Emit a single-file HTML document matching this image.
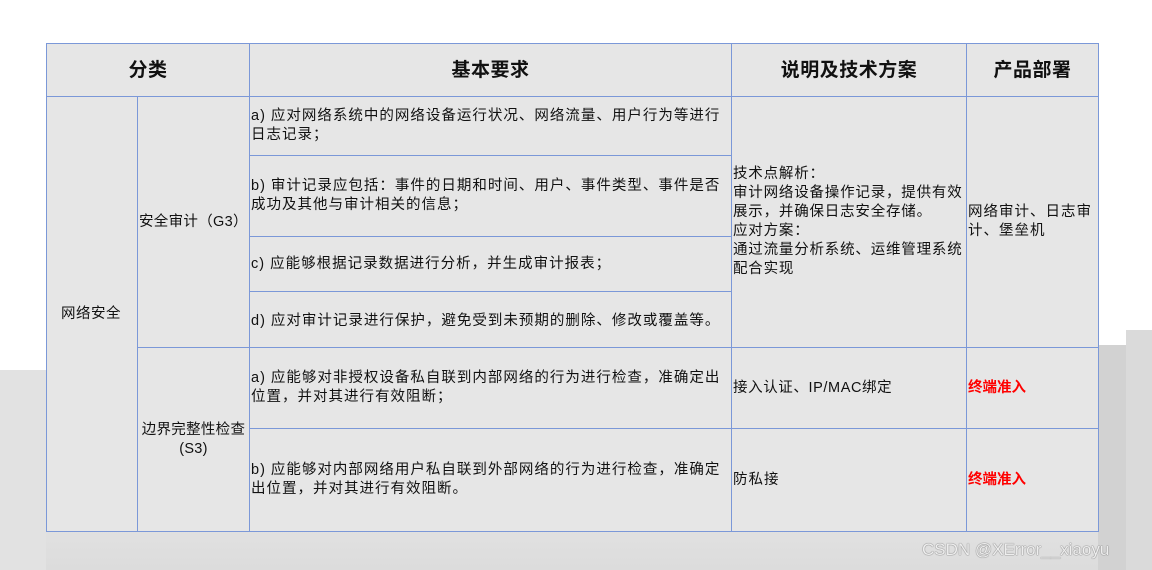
<!DOCTYPE html>
<html><head><meta charset="utf-8"><style>
body{margin:0;width:1152px;height:570px;overflow:hidden;background:#fff;position:relative;font-family:"Liberation Sans","Noto Sans CJK SC",sans-serif;}
.bg{position:absolute;left:0;right:0;bottom:0;height:200px;background:linear-gradient(to bottom,rgba(255,255,255,1) 0%,rgba(235,235,235,1) 40%,rgba(220,220,220,1) 100%);}
.b1{position:absolute}
.c{position:absolute;box-sizing:border-box;background:#e6e6e6;border:1px solid #7b98d8;font-size:14.5px;letter-spacing:1px;color:#111;line-height:19px;display:flex;align-items:center;padding:0 1px;}
.h{font-size:19px;font-weight:bold;justify-content:center;letter-spacing:0.5px}
.r{color:#f00;font-weight:bold;}
.wm{position:absolute;left:922px;top:540px;font-size:17px;color:#eee;text-shadow:0 0 1px #666,0 0 1px #888;}
</style></head><body>
<div class="bg"></div>
<div class="b1" style="left:1098px;top:345px;width:28px;height:225px;background:#d2d2d2"></div>
<div class="b1" style="left:1126px;top:330px;width:26px;height:240px;background:#dadada"></div>
<div class="b1" style="left:0;top:370px;width:46px;height:200px;background:#e2e2e2"></div>
<div class="c h" style="left:46px;top:43px;width:204px;height:54px">分类</div>
<div class="c h" style="left:249px;top:43px;width:483px;height:54px">基本要求</div>
<div class="c h" style="left:731px;top:43px;width:236px;height:54px">说明及技术方案</div>
<div class="c h" style="left:966px;top:43px;width:133px;height:54px">产品部署</div>
<div class="c" style="left:46px;top:96px;width:92px;height:436px;padding-left:14px;letter-spacing:0.5px">网络安全</div>
<div class="c" style="left:137px;top:96px;width:113px;height:252px;letter-spacing:0.3px">安全审计（G3）</div>
<div class="c" style="left:137px;top:347px;width:113px;height:185px;justify-content:center;text-align:center;letter-spacing:0.3px">边界完整性检查<br>(S3)</div>
<div class="c" style="left:249px;top:96px;width:483px;height:60px">a) 应对网络系统中的网络设备运行状况、网络流量、用户行为等进行日志记录；</div>
<div class="c" style="left:249px;top:155px;width:483px;height:82px">b) 审计记录应包括：事件的日期和时间、用户、事件类型、事件是否成功及其他与审计相关的信息；</div>
<div class="c" style="left:249px;top:236px;width:483px;height:56px">c) 应能够根据记录数据进行分析，并生成审计报表；</div>
<div class="c" style="left:249px;top:291px;width:483px;height:57px;padding-top:4px">d) 应对审计记录进行保护，避免受到未预期的删除、修改或覆盖等。</div>
<div class="c" style="left:249px;top:347px;width:483px;height:82px">a) 应能够对非授权设备私自联到内部网络的行为进行检查，准确定出位置，并对其进行有效阻断；</div>
<div class="c" style="left:249px;top:428px;width:483px;height:104px">b) 应能够对内部网络用户私自联到外部网络的行为进行检查，准确定出位置，并对其进行有效阻断。</div>
<div class="c" style="left:731px;top:96px;width:236px;height:252px;letter-spacing:0.8px">技术点解析：<br>审计网络设备操作记录，提供有效展示，并确保日志安全存储。<br>应对方案：<br>通过流量分析系统、运维管理系统配合实现</div>
<div class="c" style="left:966px;top:96px;width:133px;height:252px">网络审计、日志审计、堡垒机</div>
<div class="c" style="left:731px;top:347px;width:236px;height:82px;letter-spacing:0.6px">接入认证、IP/MAC绑定</div>
<div class="c r" style="left:966px;top:347px;width:133px;height:82px;letter-spacing:0">终端准入</div>
<div class="c" style="left:731px;top:428px;width:236px;height:104px">防私接</div>
<div class="c r" style="left:966px;top:428px;width:133px;height:104px;letter-spacing:0">终端准入</div>
<div class="wm">CSDN @XError__xiaoyu</div>
</body></html>
